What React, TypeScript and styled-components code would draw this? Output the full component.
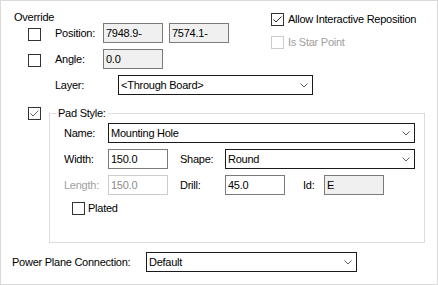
import * as React from 'react'
import styled, { createGlobalStyle } from 'styled-components'

const GlobalStyle = createGlobalStyle`
  html, body {
    margin: 0;
    padding: 0;
    background: #fff;
  }
  * {
    box-sizing: border-box;
  }
`

interface CheckProps {
  checked?: boolean
  disabled?: boolean
  mark?: string
}

const CheckBox: React.FC<CheckProps> = ({ checked, disabled, mark }) => (
  <Box $disabled={disabled}>
    {checked && (
      <svg width="11" height="11" viewBox="0 0 11 11">
        <polyline
          points="1.5,5.5 4,8 9.5,2.5"
          fill="none"
          stroke={mark || '#222'}
          strokeWidth="1"
        />
      </svg>
    )}
  </Box>
)

const Chevron = () => (
  <ChevronIcon width="8" height="5" viewBox="0 0 8 5">
    <polyline points="0.5,0.5 4,4 7.5,0.5" fill="none" stroke="#606060" strokeWidth="1" />
  </ChevronIcon>
)

const Select: React.FC<{ value: string; width: number }> = ({ value, width }) => (
  <SelectBox $width={width}>
    <span>{value}</span>
    <Chevron />
  </SelectBox>
)

export default function App() {
  return (
    <>
      <GlobalStyle />
      <Panel>
        <TopArea>
          <LeftCol>
            <Header>Override</Header>
            <Row>
              <Indent>
                <CheckBox />
              </Indent>
              <Label $width={48}>Position:</Label>
              <Field $width={60} $readonly>7948.9-</Field>
              <Field $width={60} $readonly style={{ marginLeft: 6 }}>
                7574.1-
              </Field>
            </Row>
            <Row $gap={6}>
              <Indent>
                <CheckBox />
              </Indent>
              <Label $width={48}>Angle:</Label>
              <Field $width={60} $readonly>0.0</Field>
            </Row>
          </LeftCol>
          <RightCol>
            <CheckRow>
              <CheckBox checked />
              <CheckText>Allow Interactive Reposition</CheckText>
            </CheckRow>
            <CheckRow $gap={10}>
              <CheckBox disabled />
              <CheckText $disabled>Is Star Point</CheckText>
            </CheckRow>
          </RightCol>
        </TopArea>

        <Row $gap={6} style={{ paddingLeft: 41 }}>
          <Label $width={63}>Layer:</Label>
          <Select value="<Through Board>" width={195} />
        </Row>

        <PadRow>
          <CheckBox checked mark="#6a6a6a" />
          <GroupBox>
            <Legend>Pad Style:</Legend>
            <Row>
              <Label $width={44}>Name:</Label>
              <Select value="Mounting Hole" width={307} />
            </Row>
            <Row $gap={6}>
              <Label $width={44}>Width:</Label>
              <Field $width={60}>150.0</Field>
              <Label $width={45} $left={12}>Shape:</Label>
              <Select value="Round" width={190} />
            </Row>
            <Row $gap={6}>
              <Label $width={44} $disabled>Length:</Label>
              <Field $width={60} $disabled>150.0</Field>
              <Label $width={45} $left={12}>Drill:</Label>
              <Field $width={60}>45.0</Field>
              <Label $width={21} $left={18}>Id:</Label>
              <Field $width={60} $readonly>E</Field>
            </Row>
            <CheckRow $gap={7} $left={8}>
              <CheckBox />
              <CheckText $left={3}>Plated</CheckText>
            </CheckRow>
          </GroupBox>
        </PadRow>

        <Row $gap={9} style={{ marginLeft: -2 }}>
          <Label $width={134}>Power Plane Connection:</Label>
          <Select value="Default" width={211} />
        </Row>
      </Panel>
    </>
  )
}

// Styles
const Panel = styled.div`
  width: 438px;
  height: 285px;
  border: 1px solid #dadada;
  padding: 10px 0 0 13px;
  font-family: 'Liberation Sans', Arial, sans-serif;
  font-size: 11px;
  letter-spacing: -0.25px;
  color: #000;
  background: #fff;
`

const TopArea = styled.div`
  display: flex;
`

const LeftCol = styled.div`
  width: 257px;
  display: flex;
  flex-direction: column;
`

const RightCol = styled.div`
  padding-top: 2px;
  display: flex;
  flex-direction: column;
`

const Header = styled.div`
  height: 12px;
  line-height: 12px;
`

const Row = styled.div<{ $gap?: number }>`
  display: flex;
  align-items: center;
  height: 20px;
  margin-top: ${(p) => p.$gap || 0}px;
`

const Indent = styled.div`
  padding-left: 14px;
  margin-right: 14px;
  align-self: flex-start;
  margin-top: 5px;
`

const Label = styled.span<{ $width: number; $left?: number; $disabled?: boolean }>`
  display: inline-block;
  width: ${(p) => p.$width}px;
  margin-left: ${(p) => p.$left || 0}px;
  line-height: 13px;
  white-space: nowrap;
  color: ${(p) => (p.$disabled ? '#a0a0a0' : '#000')};
`

const Field = styled.div<{ $width: number; $readonly?: boolean; $disabled?: boolean }>`
  width: ${(p) => p.$width}px;
  height: 20px;
  padding: 0 2px;
  line-height: 18px;
  flex-shrink: 0;
  border: 1px solid ${(p) => (p.$disabled ? '#cccccc' : '#7a7a7a')};
  background: ${(p) => (p.$readonly ? '#f0f0f0' : '#fff')};
  color: ${(p) => (p.$disabled ? '#8c8c8c' : '#000')};
`

const SelectBox = styled.div<{ $width: number }>`
  width: ${(p) => p.$width}px;
  height: 20px;
  flex-shrink: 0;
  display: flex;
  align-items: center;
  justify-content: space-between;
  padding: 0 4px 0 2px;
  border: 1px solid #1a1a1a;
  background: #fff;
  line-height: 18px;
`

const ChevronIcon = styled.svg`
  display: block;
  margin-top: 1px;
`

const Box = styled.div<{ $disabled?: boolean }>`
  width: 13px;
  height: 13px;
  flex-shrink: 0;
  border: 1px solid ${(p) => (p.$disabled ? '#cccccc' : '#333333')};
  background: #fff;
  display: flex;
  align-items: center;
  justify-content: center;

  svg {
    display: block;
  }
`

const CheckRow = styled.div<{ $gap?: number; $left?: number }>`
  display: flex;
  align-items: center;
  height: 13px;
  margin-top: ${(p) => p.$gap || 0}px;
  margin-left: ${(p) => p.$left || 0}px;
`

const CheckText = styled.span<{ $disabled?: boolean; $left?: number }>`
  margin-left: ${(p) => p.$left ?? 4}px;
  line-height: 13px;
  white-space: nowrap;
  color: ${(p) => (p.$disabled ? '#a0a0a0' : '#000')};
`

const PadRow = styled.div`
  display: flex;
  align-items: flex-start;
  margin-top: 12px;
  padding-left: 14px;
`

const GroupBox = styled.div`
  position: relative;
  width: 376px;
  height: 130px;
  margin: 6px 0 0 8px;
  padding: 9px 0 0 14px;
  border: 1px solid #dcdcdc;
`

const Legend = styled.span`
  position: absolute;
  top: -7px;
  left: 6px;
  padding: 0 2px;
  line-height: 13px;
  background: #fff;
`
